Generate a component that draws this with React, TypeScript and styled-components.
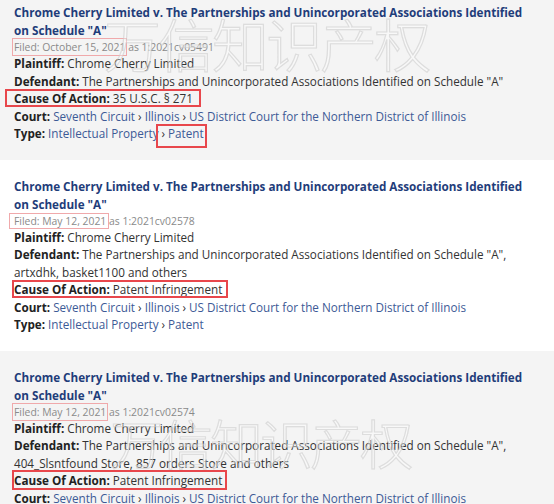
import React from 'react';
import styled, { createGlobalStyle, css } from 'styled-components';

const GlobalStyle = createGlobalStyle`
  * { box-sizing: border-box; }
  html, body { margin: 0; padding: 0; background: #fff; }
  body {
    font-family: "Open Sans", "Noto Sans", "Liberation Sans", sans-serif;
    font-size: 11.7px;
    color: #333;
    overflow: hidden;
  }
`;

const Page = styled.div`
  position: relative;
  width: 554px;
  height: 504px;
  overflow: hidden;
`;

// 목록 (살짝 스크롤된 상태)
const List = styled.div`
  margin-top: -14px;
`;

const Card = styled.div<{ $shaded?: boolean }>`
  padding: 17px 14px 17px;
  background: ${(p) => (p.$shaded ? '#f4f4f4' : '#fff')};
`;

const Title = styled.a`
  display: block;
  font-weight: 700;
  font-size: 11.7px;
  line-height: 18px;
  color: #1f3d7a;
  text-decoration: none;
`;

const Filed = styled.div`
  font-size: 10.4px;
  line-height: 16px;
  color: #8a8a8a;
`;

const Row = styled.div`
  line-height: 17.5px;
`;

const Label = styled.b`
  font-weight: 700;
  color: #222;
`;

const Crumb = styled.a`
  color: #3d5a96;
  text-decoration: none;
`;

// 빨간 표시 박스 (주석)
const Mark = styled.span<{ $tone: 'red' | 'pink'; $t: number; $r: number; $b: number; $l: number }>`
  position: relative;
  &::after {
    content: '';
    position: absolute;
    top: ${(p) => p.$t}px;
    right: ${(p) => p.$r}px;
    bottom: ${(p) => p.$b}px;
    left: ${(p) => p.$l}px;
    pointer-events: none;
    ${(p) =>
      p.$tone === 'red'
        ? css`border: 2px solid #e8474c;`
        : css`border: 1.5px solid #f0a9ab;`}
  }
`;

const Watermark = styled.div<{ $top: number; $left: number; $size: number }>`
  position: absolute;
  top: ${(p) => p.$top}px;
  left: ${(p) => p.$left}px;
  font-family: "Noto Sans CJK SC", sans-serif;
  font-weight: 300;
  font-size: ${(p) => p.$size}px;
  line-height: 1;
  letter-spacing: -3px;
  color: rgba(255, 255, 255, 0.35);
  -webkit-text-stroke: 1.2px rgba(200, 200, 200, 0.55);
  pointer-events: none;
  white-space: nowrap;
`;

const Sep = () => <span> › </span>;

type CaseItem = {
  filed: string;
  docket: string;
  defendant: string;
  cause: string;
  shaded: boolean;
  causeMark: [number, number, number, number];
  filedMark: [number, number, number, number];
  markPatent?: boolean;
};

const cases: CaseItem[] = [
  {
    filed: 'October 15, 2021',
    docket: '1:2021cv05491',
    defendant: 'The Partnerships and Unincorporated Associations Identified on Schedule "A"',
    cause: '35 U.S.C. § 271',
    shaded: true,
    causeMark: [-1, -8, -1, -9],
    filedMark: [-2, -2, -2, -2],
    markPatent: true,
  },
  {
    filed: 'May 12, 2021',
    docket: '1:2021cv02578',
    defendant:
      'The Partnerships and Unincorporated Associations Identified on Schedule "A", artxdhk, basket1100 and others',
    cause: 'Patent Infringement',
    shaded: false,
    causeMark: [-1, -6, -1, -2],
    filedMark: [-1, -3, -1, -5],
  },
  {
    filed: 'May 12, 2021',
    docket: '1:2021cv02574',
    defendant:
      'The Partnerships and Unincorporated Associations Identified on Schedule "A", 404_Slsntfound Store, 857 orders Store and others',
    cause: 'Patent Infringement',
    shaded: true,
    causeMark: [-2, -5, -2, -2],
    filedMark: [-2, -2, -2, -2],
  },
];

export default function App() {
  return (
    <Page>
      <GlobalStyle />
      <List>
        {cases.map((c, i) => (
          <Card key={i} $shaded={c.shaded}>
            <Title href="#">
              Chrome Cherry Limited v. The Partnerships and Unincorporated Associations Identified on Schedule "A"
            </Title>
            <Filed>
              <Mark $tone="pink" $t={c.filedMark[0]} $r={c.filedMark[1]} $b={c.filedMark[2]} $l={c.filedMark[3]}>
                Filed: {c.filed}
              </Mark>{' '}
              as {c.docket}
            </Filed>
            <Row>
              <Label>Plaintiff:</Label> Chrome Cherry Limited
            </Row>
            <Row>
              <Label>Defendant:</Label> {c.defendant}
            </Row>
            <Row>
              <Mark $tone="red" $t={c.causeMark[0]} $r={c.causeMark[1]} $b={c.causeMark[2]} $l={c.causeMark[3]}>
                <Label>Cause Of Action:</Label> {c.cause}
              </Mark>
            </Row>
            <Row>
              <Label>Court:</Label> <Crumb href="#">Seventh Circuit</Crumb>
              <Sep />
              <Crumb href="#">Illinois</Crumb>
              <Sep />
              <Crumb href="#">US District Court for the Northern District of Illinois</Crumb>
            </Row>
            <Row>
              <Label>Type:</Label> <Crumb href="#">Intellectual Property</Crumb>
              {c.markPatent ? (
                <Mark $tone="red" $t={-1} $r={-3} $b={-7} $l={-3}>
                  <Sep />
                  <Crumb href="#">Patent</Crumb>
                </Mark>
              ) : (
                <>
                  <Sep />
                  <Crumb href="#">Patent</Crumb>
                </>
              )}
            </Row>
          </Card>
        ))}
      </List>
      <Watermark $top={14} $left={104} $size={57}>万信知识产权</Watermark>
      <Watermark $top={416} $left={110} $size={53}>万信知识产权</Watermark>
    </Page>
  );
}
